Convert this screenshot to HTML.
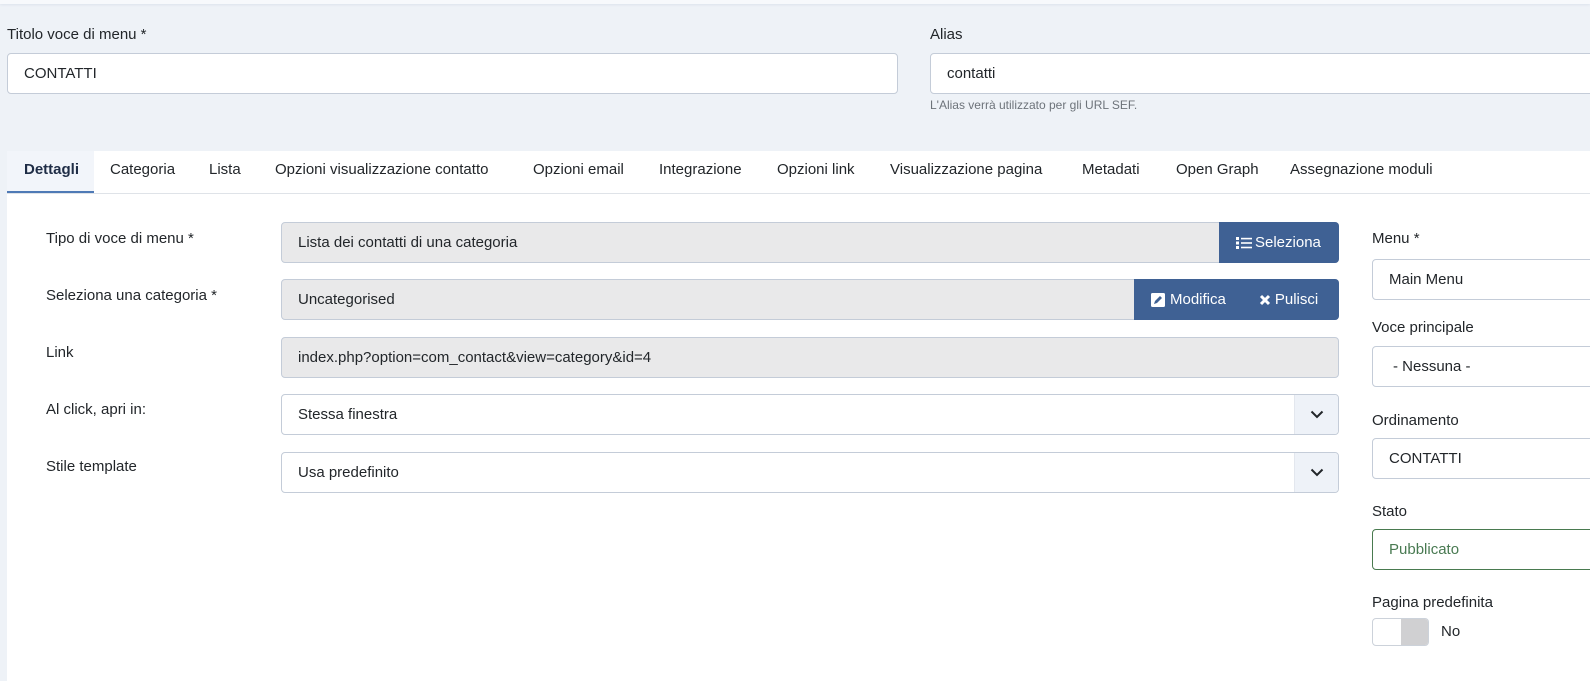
<!DOCTYPE html>
<html><head><meta charset="utf-8"><style>
*{box-sizing:border-box;margin:0;padding:0}
body{width:1590px;height:670px;overflow:hidden;background:#eef2f7;font-family:"Liberation Sans",sans-serif;color:#22262a;position:relative;font-size:15px}
.a{position:absolute;white-space:nowrap}
.inp{position:absolute;background:#fff;border:1px solid #c4ccd8;border-radius:4px;padding-left:16px;display:flex;align-items:center;font-size:15px;color:#22262a}
.ro{background:#e9e9ea;}
.btn{position:absolute;background:#3f6194;color:#fff;display:flex;align-items:center;font-size:15px;border-radius:0 4px 4px 0}
.sel{position:absolute;right:0;top:0;bottom:0;width:44px;background:#eef2f8;border-left:1px solid #e3e7ee;display:flex;align-items:center;justify-content:center;border-radius:0 4px 4px 0}
.lbl{position:absolute;font-size:15px;color:#22262a;white-space:nowrap}
</style></head><body>
<div class="a" style="left:0;top:0;width:1590px;height:4px;background:#f7f9fc;box-shadow:0 1px 2px #dde3ec"></div>
<div class="lbl" style="left:7px;top:26px">Titolo voce di menu *</div>
<div class="inp" style="left:7px;top:53px;width:891px;height:41px">CONTATTI</div>
<div class="lbl" style="left:930px;top:26px">Alias</div>
<div class="inp" style="left:930px;top:53px;width:680px;height:41px">contatti</div>
<div class="a" style="left:930px;top:98px;font-size:12px;color:#6d737a">L'Alias verrà utilizzato per gli URL SEF.</div>

<div class="a" style="left:7px;top:151px;width:1600px;height:530px;background:#fff"></div>
<div class="a" style="left:7px;top:151px;width:87px;height:43px;background:#f2f5fa;border-bottom:3px solid #4f7ab6"></div>
<div class="a" style="left:7px;top:193px;width:1600px;height:1px;background:#dfe3e8"></div>
<div class="a" style="left:24px;top:161px;font-weight:bold;color:#1f2d46">Dettagli</div>
<div class="a" style="left:110px;top:161px">Categoria</div>
<div class="a" style="left:209px;top:161px">Lista</div>
<div class="a" style="left:275px;top:161px">Opzioni visualizzazione contatto</div>
<div class="a" style="left:533px;top:161px">Opzioni email</div>
<div class="a" style="left:659px;top:161px">Integrazione</div>
<div class="a" style="left:777px;top:161px">Opzioni link</div>
<div class="a" style="left:890px;top:161px">Visualizzazione pagina</div>
<div class="a" style="left:1082px;top:161px">Metadati</div>
<div class="a" style="left:1176px;top:161px">Open Graph</div>
<div class="a" style="left:1290px;top:161px">Assegnazione moduli</div>

<div class="lbl" style="left:46px;top:230px">Tipo di voce di menu *</div>
<div class="lbl" style="left:46px;top:287px">Seleziona una categoria *</div>
<div class="lbl" style="left:46px;top:344px">Link</div>
<div class="lbl" style="left:46px;top:401px">Al click, apri in:</div>
<div class="lbl" style="left:46px;top:458px">Stile template</div>

<div class="inp ro" style="left:281px;top:222px;width:1058px;height:41px">Lista dei contatti di una categoria</div>
<div class="btn" style="left:1219px;top:222px;width:120px;height:41px;padding-left:17px">
<svg width="16" height="14" viewBox="0 0 16 14" style="margin-right:3px"><g fill="#fff"><rect x="0" y="1" width="3" height="3"/><rect x="0" y="5.5" width="3" height="3"/><rect x="0" y="10" width="3" height="3"/><rect x="5" y="1.8" width="11" height="1.6"/><rect x="5" y="6.2" width="11" height="1.6"/><rect x="5" y="10.7" width="11" height="1.6"/></g></svg>Seleziona</div>
<div class="inp ro" style="left:281px;top:279px;width:1058px;height:41px">Uncategorised</div>
<div class="btn" style="left:1134px;top:279px;width:205px;height:41px;padding-left:17px">
<svg width="14" height="14" viewBox="0 0 14 14" style="margin-right:5px"><rect width="14" height="14" rx="1.5" fill="#fff"/><path d="M3 11l1-3 5-5 2 2-5 5z" fill="#3f6194"/></svg>Modifica
<svg width="12" height="12" viewBox="0 0 12 12" style="margin-left:33px;margin-right:4px"><path d="M2 2l8 8M10 2l-8 8" stroke="#fff" stroke-width="3"/></svg>Pulisci</div>
<div class="inp ro" style="left:281px;top:337px;width:1058px;height:41px">index.php?option=com_contact&amp;view=category&amp;id=4</div>
<div class="inp" style="left:281px;top:394px;width:1058px;height:41px">Stessa finestra<div class="sel"><svg width="14" height="9" viewBox="0 0 14 9"><path d="M1.5 1.5l5.5 5.5 5.5-5.5" stroke="#22262a" stroke-width="2" fill="none"/></svg></div></div>
<div class="inp" style="left:281px;top:452px;width:1058px;height:41px">Usa predefinito<div class="sel"><svg width="14" height="9" viewBox="0 0 14 9"><path d="M1.5 1.5l5.5 5.5 5.5-5.5" stroke="#22262a" stroke-width="2" fill="none"/></svg></div></div>

<div class="lbl" style="left:1372px;top:230px">Menu *</div>
<div class="inp" style="left:1372px;top:259px;width:240px;height:41px">Main Menu</div>
<div class="lbl" style="left:1372px;top:319px">Voce principale</div>
<div class="inp" style="left:1372px;top:346px;width:240px;height:41px;padding-left:20px">- Nessuna -</div>
<div class="lbl" style="left:1372px;top:412px">Ordinamento</div>
<div class="inp" style="left:1372px;top:438px;width:240px;height:41px">CONTATTI</div>
<div class="lbl" style="left:1372px;top:503px">Stato</div>
<div class="inp" style="left:1372px;top:529px;width:240px;height:41px;border-color:#497a4f;color:#497a52">Pubblicato</div>
<div class="lbl" style="left:1372px;top:594px">Pagina predefinita</div>
<div class="a" style="left:1372px;top:618px;width:57px;height:28px;border:1px solid #ccd2da;border-radius:4px;background:#fff;overflow:hidden"><div style="position:absolute;left:28px;top:0;width:29px;height:28px;background:#d0d0d2"></div></div>
<div class="lbl" style="left:1441px;top:623px">No</div>
</body></html>
